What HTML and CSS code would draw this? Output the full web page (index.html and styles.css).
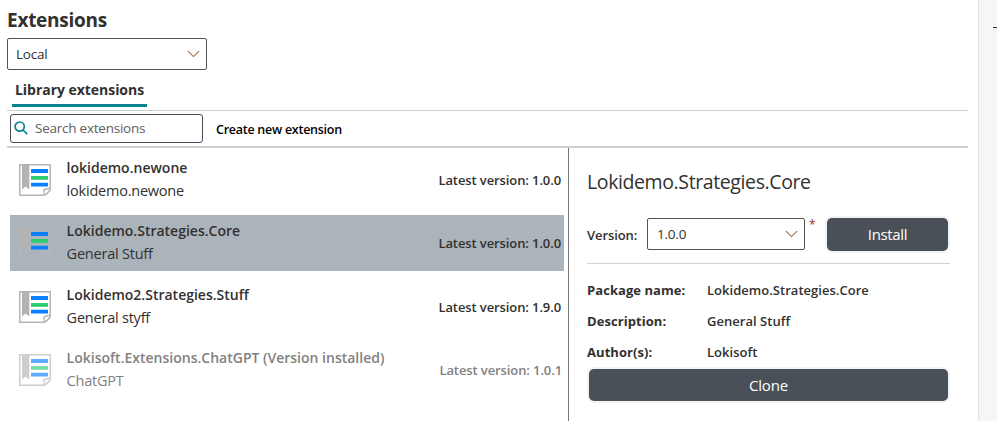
FILE: index.html
```html
<!DOCTYPE html>
<html lang="en">
<head>
<meta charset="utf-8">
<title>Extensions</title>
<link rel="stylesheet" href="styles.css">
</head>
<body>
<svg class="defs" aria-hidden="true">
  <symbol id="package" viewBox="0 0 32 32">
    <path d="M.75.75H31.25V25.5Q28.5 30.2 24.8 31.25H.75Z" fill="none" stroke="#b5b5b5" stroke-width="1.5"/>
    <path d="M3 1H10.3V25.4L6.65 22.6 3 25.4Z" fill="#b3b3b3"/>
    <path d="M24.8 31Q26 28.5 24.8 26.2Q27.5 24.2 31 24.6" fill="none" stroke="#b5b5b5" stroke-width="1.5"/>
    <path d="M12 5H29V9H12ZM12 18.8H29V22.6H12Z" fill="#0a80ff"/>
    <path d="M12 12H29V15.8H12Z" fill="#2ecc71"/>
  </symbol>
  <symbol id="chevron" viewBox="0 0 14 8">
    <path d="M1 1 7 6.8 13 1" fill="none" stroke="#9a6a4c" stroke-width="1.1"/>
  </symbol>
</svg>
<div class="app">
  <main class="page">
    <h1>Extensions</h1>
    <div class="select source"><span>Local</span><svg class="chevron"><use href="#chevron"/></svg></div>
    <nav class="tabs"><span class="tab">Library extensions</span></nav>
    <div class="toolbar">
      <div class="search">
        <svg class="lens" viewBox="0 0 14 14"><circle cx="5.7" cy="5.6" r="4.6"/><path d="M9 9 13.2 13.2"/></svg>
        <span>Search extensions</span>
      </div>
      <span class="create">Create new extension</span>
    </div>
    <div class="content">
      <section class="list">
        <article class="item">
          <svg class="icon"><use href="#package"/></svg>
          <div class="names"><div class="name">lokidemo.newone</div><div class="desc">lokidemo.newone</div></div>
          <div class="latest">Latest version: 1.0.0</div>
        </article>
        <article class="item selected">
          <svg class="icon"><use href="#package"/></svg>
          <div class="names"><div class="name">Lokidemo.Strategies.Core</div><div class="desc">General Stuff</div></div>
          <div class="latest">Latest version: 1.0.0</div>
        </article>
        <article class="item">
          <svg class="icon"><use href="#package"/></svg>
          <div class="names"><div class="name">Lokidemo2.Strategies.Stuff</div><div class="desc">General styff</div></div>
          <div class="latest">Latest version: 1.9.0</div>
        </article>
        <article class="item installed">
          <svg class="icon"><use href="#package"/></svg>
          <div class="names"><div class="name">Lokisoft.Extensions.ChatGPT (Version installed)</div><div class="desc">ChatGPT</div></div>
          <div class="latest">Latest version: 1.0.1</div>
        </article>
      </section>
      <section class="detail">
        <h2>Lokidemo.Strategies.Core</h2>
        <div class="install-row">
          <span class="label">Version:</span>
          <div class="select version"><span>1.0.0</span><svg class="chevron"><use href="#chevron"/></svg></div>
          <span class="required">*</span>
          <div class="button install">Install</div>
        </div>
        <dl>
          <dt>Package name:</dt><dd>Lokidemo.Strategies.Core</dd>
          <dt>Description:</dt><dd>General Stuff</dd>
          <dt>Author(s):</dt><dd>Lokisoft</dd>
        </dl>
        <div class="button clone">Clone</div>
      </section>
    </div>
  </main>
  <aside class="rail"><span class="dash"></span></aside>
</div>
</body>
</html>
```
FILE: styles.css
```css
* { box-sizing: border-box; }
body { margin: 0; background: #fff; color: #323130; font-family: "Open Sans", "Liberation Sans", sans-serif; overflow: hidden; }
h1, h2, dl, dd { margin: 0; }
.defs { display: block; width: 0; height: 0; }
.app { display: flex; height: 421px; white-space: nowrap; }
.page { width: 978px; padding: 8px 10px 0 7px; display: flex; flex-direction: column; }
h1 { height: 30px; font-size: 19px; line-height: 24px; font-weight: 700; letter-spacing: -.25px; }

.select { display: flex; align-items: center; justify-content: space-between; height: 32px; padding: 0 6px 0 8px; border: 1px solid #55534f; border-radius: 2px; font-size: 13.5px; letter-spacing: -.22px; }
.source { width: 200px; }
.version.select { width: 158px; padding-left: 9px; }
.chevron { width: 13px; height: 8px; }

.tabs { width: 961px; height: 41px; padding: 4px 5px 0; border-bottom: 1px solid #d0d0d0; }
.tab { display: block; width: 135px; height: 33px; padding-left: 3px; border-bottom: 3px solid #07838f; font-size: 14px; line-height: 32px; font-weight: 700; letter-spacing: -.04px; }

.toolbar { display: flex; align-items: center; width: 961px; height: 37px; padding: 0 3px 1px; border-bottom: 2px solid #d2d2d2; }
.search { display: flex; align-items: center; width: 193px; height: 29px; padding-left: 3px; border: 1px solid #47505a; border-radius: 3px; color: #605e5c; font-size: 13.5px; letter-spacing: -.24px; }
.lens { width: 14px; height: 14px; margin-right: 7px; fill: none; stroke: #07838f; stroke-width: 1.7; }
.create { margin: 2px 0 0 13px; color: #000; font-size: 12.5px; font-weight: 600; letter-spacing: -.26px; }

.content { display: flex; flex: 1; }
.list { display: grid; grid-template-rows: 63px 64px 63px 56px; width: 561px; padding: 4px 4px 0 3px; }
.item { display: flex; align-items: center; height: 56px; padding: 0 3px 0 9px; }
.selected { background: #acb4bb; }
.icon { width: 32px; height: 32px; margin-right: 15.6px; }
.names { flex: 1; padding-bottom: 2px; }
.name { height: 22px; font-size: 14px; line-height: 22px; font-weight: 600; }
.desc { height: 22px; font-size: 14.5px; line-height: 23px; letter-spacing: -.22px; }
.latest { font-size: 13px; font-weight: 600; letter-spacing: -.1px; }
.installed { padding-right: 2px; color: #828180; }
.installed .icon { opacity: .65; }

.detail { width: 400px; padding: 21px 0 0 18px; border-left: 1px solid #777; }
h2 { height: 49px; font-size: 19.5px; line-height: 26px; font-weight: 400; letter-spacing: -.39px; }
.install-row { display: flex; align-items: flex-start; width: 363px; height: 46px; border-bottom: 1px solid #d2d2d2; }
.label { width: 60px; padding-top: 1px; font-size: 13px; line-height: 32px; font-weight: 600; letter-spacing: -.08px; }
.required { width: 22px; padding-left: 4px; color: #a4262c; font-size: 12px; line-height: 14px; }
.button { border-radius: 5px; background: #495057; box-shadow: 0 0 0 2px #f1f3f5; color: #fff; text-align: center; }
.install { width: 121px; height: 33px; font-size: 15px; line-height: 33px; letter-spacing: -.35px; }
dl { display: grid; grid-template: repeat(3, 31px) / 120px auto; margin-top: 11px; font-size: 13px; line-height: 31px; }
dt { font-weight: 700; letter-spacing: .06px; }
dd { font-weight: 600; letter-spacing: .03px; }
.clone { width: 359px; height: 32px; margin: 1px 0 0 2px; font-size: 15px; line-height: 32px; letter-spacing: -.15px; }

.rail { width: 19px; border-left: 1px solid #e3e3e3; background: #f6f6f7; }
.dash { display: block; width: 4px; height: 1px; margin: 27px 0 0 14px; background: #333; }
```
